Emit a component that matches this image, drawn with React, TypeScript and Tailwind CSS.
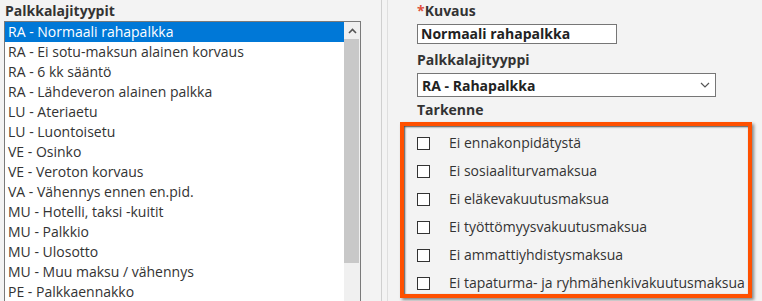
const items = [
  'RA - Normaali rahapalkka',
  'RA - Ei sotu-maksun alainen korvaus',
  'RA - 6 kk sääntö',
  'RA - Lähdeveron alainen palkka',
  'LU - Ateriaetu',
  'LU - Luontoisetu',
  'VE - Osinko',
  'VE - Veroton korvaus',
  'VA - Vähennys ennen en.pid.',
  'MU - Hotelli, taksi -kuitit',
  'MU - Palkkio',
  'MU - Ulosotto',
  'MU - Muu maksu / vähennys',
  'PE - Palkkaennakko',
];

const options = [
  'Ei ennakonpidätystä',
  'Ei sosiaaliturvamaksua',
  'Ei eläkevakuutusmaksua',
  'Ei työttömyysvakuutusmaksua',
  'Ei ammattiyhdistysmaksua',
  'Ei tapaturma- ja ryhmähenkivakuutusmaksua',
];

export default function App() {
  return (
    <div className="flex w-[762px] h-[301px] overflow-hidden bg-[#f3f3f3] text-[14px] text-[#333] font-['Open_Sans',sans-serif]">
      {/* Left: list of wage types */}
      <div className="w-[382px] shrink-0 border-r border-[#cfcfcf] pl-[4px]">
        <div className="h-[21px] pl-[1px] pt-[1px] font-bold leading-[20px]">Palkkalajityypit</div>
        <div className="flex w-[357px] h-[300px] border border-[#7a7a7a] bg-white">
          <ul className="w-[339px]">
            {items.map((item, i) => (
              <li
                key={item}
                className={
                  i === 0
                    ? 'h-[20px] pl-[3px] leading-[20px] bg-[#0078d7] text-white'
                    : 'h-[20px] pl-[3px] leading-[20px]'
                }
              >
                {item}
              </li>
            ))}
          </ul>
          <div className="w-[16px] bg-[#f0f0f0] flex flex-col">
            <div className="h-[17px] flex items-center justify-center">
              <svg width="9" height="6" viewBox="0 0 9 6">
                <path d="M1 5 L4.5 1.5 L8 5" fill="none" stroke="#555" strokeWidth="1.6" />
              </svg>
            </div>
            <div className="w-[15px] h-[224px] bg-[#c8c8c8]" />
          </div>
        </div>
      </div>

      {/* Right: details */}
      <div className="ml-[5px] flex-1 border-l border-[#dedede] pl-[12px]">
        <div className="flex flex-col pl-[17px]">
          <div className="h-[21px] pt-[1px] font-bold leading-[20px]">
            <span className="text-[#e0503c]">*</span>Kuvaus
          </div>
          <div className="mt-[3px] w-[200px] h-[20px] border border-[#767676] bg-white pl-[3px] font-bold leading-[18px] text-[#222]">
            Normaali rahapalkka
          </div>
          <div className="mt-[6px] h-[20px] font-bold leading-[20px]">Palkkalajityyppi</div>
          <div className="mt-[3px] w-[299px] h-[24px] border border-[#767676] bg-white pl-[4px] pr-[5px] flex items-center justify-between font-bold text-[#222]">
            <span>RA - Rahapalkka</span>
            <svg width="10" height="6" viewBox="0 0 10 6">
              <path d="M1 1 L5 5 L9 1" fill="none" stroke="#555" strokeWidth="1.2" />
            </svg>
          </div>
          <div className="mt-[3px] h-[20px] font-bold leading-[20px]">Tarkenne</div>
        </div>
        <div className="mt-[2px] w-[352px] h-[176px] border-4 border-[#ff5000] shadow-[2px_2px_3px_rgba(0,0,0,0.45)]">
          <div className="h-full flex flex-col gap-[8px] pt-[7px] pl-[13px] shadow-[inset_1px_1px_2px_rgba(0,0,0,0.7)]">
            {options.map((label) => (
              <label key={label} className="flex items-center h-[20px]">
                <span className="w-[13px] h-[13px] border border-[#333] bg-white" />
                <span className="ml-[19px] leading-[20px]">{label}</span>
              </label>
            ))}
          </div>
        </div>
      </div>
    </div>
  );
}
